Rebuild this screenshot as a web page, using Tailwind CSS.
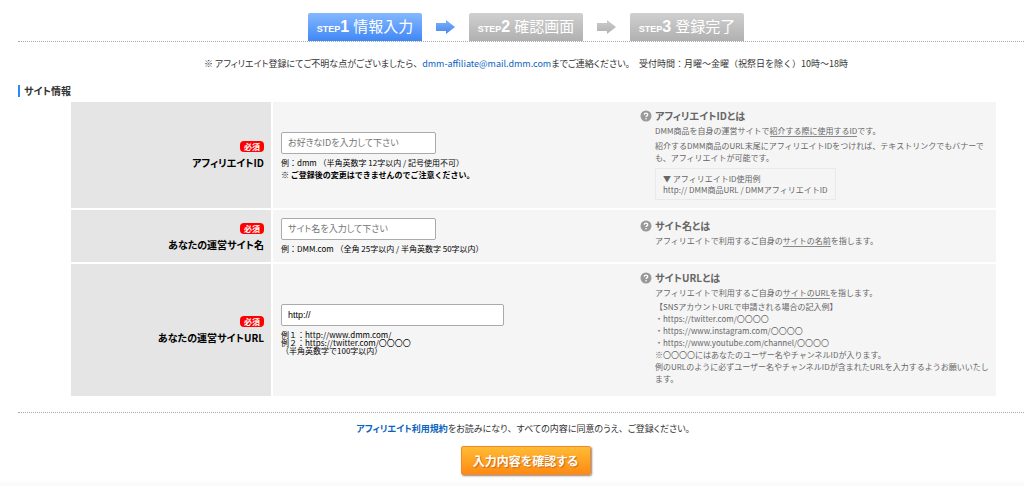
<!DOCTYPE html>
<html lang="ja">
<head>
<meta charset="utf-8">
<meta name="viewport" content="width=device-width, initial-scale=1">
<title>DMMアフィリエイト 登録</title>
<script src="https://cdn.jsdelivr.net/npm/@tailwindcss/browser@4"></script>
</head>
<body class="min-h-screen bg-white font-['Noto_Sans_CJK_JP','Liberation_Sans',sans-serif] text-[9px] leading-3 text-[#333] [font-feature-settings:'palt']">
<main class="pl-[18px]">
  <ol class="flex items-end justify-center gap-[14px] border-b border-dotted border-[#aaa] pt-[13px] pl-[10px] text-white">
    <li class="flex h-7 w-[114px] items-center justify-center rounded-t-[2px] bg-linear-to-b from-[#85b8ff] to-[#3f87f5]">
      <span class="flex items-baseline font-['Liberation_Sans',sans-serif] font-bold"><span class="text-[9px]">STEP</span><span class="text-[16px]">1</span><span class="ml-1 font-['Noto_Sans_CJK_JP',sans-serif] text-[15px] font-normal">情報入力</span></span>
    </li>
    <li class="flex h-7 items-center" aria-hidden="true"><svg class="h-[14px] w-[19px]" viewBox="0 0 19 14"><defs><linearGradient id="b" x2="0" y2="1"><stop stop-color="#7fb1fa"/><stop offset="1" stop-color="#4589ee"/></linearGradient></defs><path d="M0 3h10V0l9 7-9 7v-3H0z" fill="url(#b)"/></svg></li>
    <li class="flex h-7 w-[114px] items-center justify-center rounded-t-[2px] bg-linear-to-b from-[#d0d0d0] to-[#b0b0b0]">
      <span class="flex items-baseline font-['Liberation_Sans',sans-serif] font-bold"><span class="text-[9px]">STEP</span><span class="text-[16px]">2</span><span class="ml-1 font-['Noto_Sans_CJK_JP',sans-serif] text-[15px] font-normal">確認画面</span></span>
    </li>
    <li class="flex h-7 items-center" aria-hidden="true"><svg class="h-[14px] w-[19px]" viewBox="0 0 19 14"><defs><linearGradient id="g" x2="0" y2="1"><stop stop-color="#ccc"/><stop offset="1" stop-color="#b2b2b2"/></linearGradient></defs><path d="M0 3h10V0l9 7-9 7v-3H0z" fill="url(#g)"/></svg></li>
    <li class="flex h-7 w-[114px] items-center justify-center rounded-t-[2px] bg-linear-to-b from-[#d0d0d0] to-[#b0b0b0]">
      <span class="flex items-baseline font-['Liberation_Sans',sans-serif] font-bold"><span class="text-[9px]">STEP</span><span class="text-[16px]">3</span><span class="ml-1 font-['Noto_Sans_CJK_JP',sans-serif] text-[15px] font-normal">登録完了</span></span>
    </li>
  </ol>

  <p class="mt-4 pl-[10px] text-center">※ アフィリエイト登録にてご不明な点がございましたら<span class="[font-feature-settings:normal]">、</span><a href="mailto:dmm-affiliate@mail.dmm.com" class="text-[#0b63c0]">dmm-affiliate@mail.dmm.com</a>までご連絡ください<span class="[font-feature-settings:normal]">。　受付時間：月曜〜金曜（祝祭日を除く）10時〜18時</span></p>

  <h2 class="mt-[15px] border-l-2 border-[#2a8bff] pl-1 text-[10px] leading-3 font-bold">サイト情報</h2>

  <form class="mt-[5px]">
    <div class="mr-[28px] ml-[53px]">
    <table class="w-full table-fixed border-collapse bg-[#f5f5f5]">
      <colgroup><col class="w-[201px]"><col class="w-[368px]"><col></colgroup>
      <tbody class="[font-feature-settings:normal]">
        <tr class="h-[107px] border-b-2 border-white">
          <th scope="row" class="border-r-2 border-white bg-[#e5e5e5] pr-[7px] pb-[2px] text-right align-middle text-[10px] leading-[17px] text-black [font-feature-settings:'palt']">
            <span class="inline-block rounded-[4px] bg-[#f00] px-1 text-[8px] leading-[11px] text-white">必須</span><br><label for="aid">アフィリエイトID</label>
          </th>
          <td class="pt-[2px] pl-2 align-middle text-[8px] text-black">
            <input id="aid" type="text" placeholder="お好きなIDを入力して下さい" class="mb-[3px] block h-[22px] w-[155px] rounded-[2px] border border-[#aaa] bg-white px-[6px] text-[9px] [font-feature-settings:'palt'] placeholder:text-[#757575]">
            <p>例：dmm （半角英数字 12字以内 / 記号使用不可）</p>
            <p class="font-bold">※ ご登録後の変更はできませんのでご注意ください。</p>
          </td>
          <td class="pt-2 align-top text-[8px] text-[#666]">
            <div class="flex gap-[3px]">
              <svg class="h-3 w-3 shrink-0" viewBox="0 0 12 12" aria-hidden="true"><circle cx="6" cy="6" r="5.5" fill="#999"/><path d="M4.2 4.7c.1-2 3.5-2.100 3.500 0 0 1.200-1.700 1.200-1.700 2.400" fill="none" stroke="#fff" stroke-width="1.300"/><circle cx="6" cy="8.700" r=".8" fill="#fff"/></svg>
              <div>
                <h3 class="mb-[3px] text-[10px] font-bold [font-feature-settings:'palt']">アフィリエイトIDとは</h3>
                <p class="mb-[3px]">DMM商品を自身の運営サイトで<span class="border-b border-[#888]">紹介する際に使用するID</span>です。</p>
                <p>紹介するDMM商品のURL末尾にアフィリエイトIDをつければ、テキストリンクでもバナーでも、アフィリエイトが可能です。</p>
                <p class="mt-1 inline-block border border-[#e9e9e9] px-[7px] py-1 leading-[11px]">▼ アフィリエイトID使用例<br>http:// DMM商品URL / DMMアフィリエイトID</p>
              </div>
            </div>
          </td>
        </tr>
        <tr class="h-[54px] border-b-2 border-white">
          <th scope="row" class="border-r-2 border-white bg-[#e5e5e5] pr-[7px] text-right align-middle text-[10px] leading-[17px] text-black [font-feature-settings:'palt']">
            <span class="inline-block rounded-[4px] bg-[#f00] px-1 text-[8px] leading-[11px] text-white">必須</span><br><label for="site">あなたの運営サイト名</label>
          </th>
          <td class="pl-2 align-middle text-[8px] text-black">
            <input id="site" type="text" placeholder="サイト名を入力して下さい" class="mb-[3px] block h-[22px] w-[155px] rounded-[2px] border border-[#aaa] bg-white px-[6px] text-[9px] [font-feature-settings:'palt'] placeholder:text-[#757575]">
            <p>例：DMM.com （全角 25字以内 / 半角英数字 50字以内）</p>
          </td>
          <td class="pt-[10px] align-top text-[8px] text-[#666]">
            <div class="flex gap-[3px]">
              <svg class="h-3 w-3 shrink-0" viewBox="0 0 12 12" aria-hidden="true"><circle cx="6" cy="6" r="5.5" fill="#999"/><path d="M4.2 4.7c.1-2 3.5-2.100 3.500 0 0 1.200-1.700 1.200-1.700 2.400" fill="none" stroke="#fff" stroke-width="1.300"/><circle cx="6" cy="8.700" r=".8" fill="#fff"/></svg>
              <div>
                <h3 class="mb-[3px] text-[10px] font-bold [font-feature-settings:'palt']">サイト名とは</h3>
                <p>アフィリエイトで利用するご自身の<span class="border-b border-[#888]">サイトの名前</span>を指します。</p>
              </div>
            </div>
          </td>
        </tr>
        <tr class="h-[133px]">
          <th scope="row" class="border-r-2 border-white bg-[#e5e5e5] pr-[7px] pb-[2px] text-right align-middle text-[10px] leading-[17px] text-black [font-feature-settings:'palt']">
            <span class="inline-block rounded-[4px] bg-[#f00] px-1 text-[8px] leading-[11px] text-white">必須</span><br><label for="url">あなたの運営サイトURL</label>
          </th>
          <td class="pb-[2px] pl-2 align-middle text-[8px] leading-2 text-black">
            <input id="url" type="text" value="http://" class="mb-[5px] block h-[22px] w-[223px] rounded-[2px] border border-[#aaa] bg-white px-[6px] font-['Liberation_Sans',sans-serif] text-[9px]">
            <p>例１：http://www.dmm.com/<br>例２：https://twitter.com/〇〇〇〇<br>（半角英数字で100字以内）</p>
          </td>
          <td class="pt-2 align-top text-[8px] text-[#666]">
            <div class="flex gap-[3px]">
              <svg class="h-3 w-3 shrink-0" viewBox="0 0 12 12" aria-hidden="true"><circle cx="6" cy="6" r="5.5" fill="#999"/><path d="M4.2 4.7c.1-2 3.5-2.100 3.500 0 0 1.200-1.700 1.200-1.700 2.400" fill="none" stroke="#fff" stroke-width="1.300"/><circle cx="6" cy="8.700" r=".8" fill="#fff"/></svg>
              <div>
                <h3 class="mb-[3px] text-[10px] font-bold [font-feature-settings:'palt']">サイトURLとは</h3>
                <p class="mb-[2px]">アフィリエイトで利用するご自身の<span class="border-b border-[#888]">サイトのURL</span>を指します。</p>
                <p>【SNSアカウントURLで申請される場合の記入例】<br>・https://twitter.com/〇〇〇〇<br>・https://www.instagram.com/〇〇〇〇<br>・https://www.youtube.com/channel/〇〇〇〇<br>※〇〇〇〇にはあなたのユーザー名やチャンネルIDが入ります。<br>例のURLのように必ずユーザー名やチャンネルIDが含まれたURLを入力するようお願いいたします。</p>
              </div>
            </div>
          </td>
        </tr>
      </tbody>
    </table>
    </div>

    <div class="mt-4 border-t border-dotted border-[#aaa] pt-[10px] pl-[9px] text-center">
      <p><a href="#terms" class="font-bold text-[#0b63c0]">アフィリエイト利用規約</a>をお読みになり<span class="[font-feature-settings:normal]">、</span>すべての内容に同意のうえ<span class="[font-feature-settings:normal]">、</span>ご登録ください<span class="[font-feature-settings:normal]">。</span></p>
      <button type="submit" class="mt-[11px] h-[29px] w-[130px] rounded-[2px] border border-[#f08a2c] bg-linear-to-b from-[#ffbb33] to-[#ff8a12] text-[12px] font-bold text-white shadow-[1px_1px_2px_#888] text-shadow-[1px_1px_1px_#c86a10]">入力内容を確認する</button>
    </div>
  </form>
</main>
<div class="mt-1 h-[7px] bg-linear-to-b from-white to-[#f9f9f9]"></div>
</body>
</html>
